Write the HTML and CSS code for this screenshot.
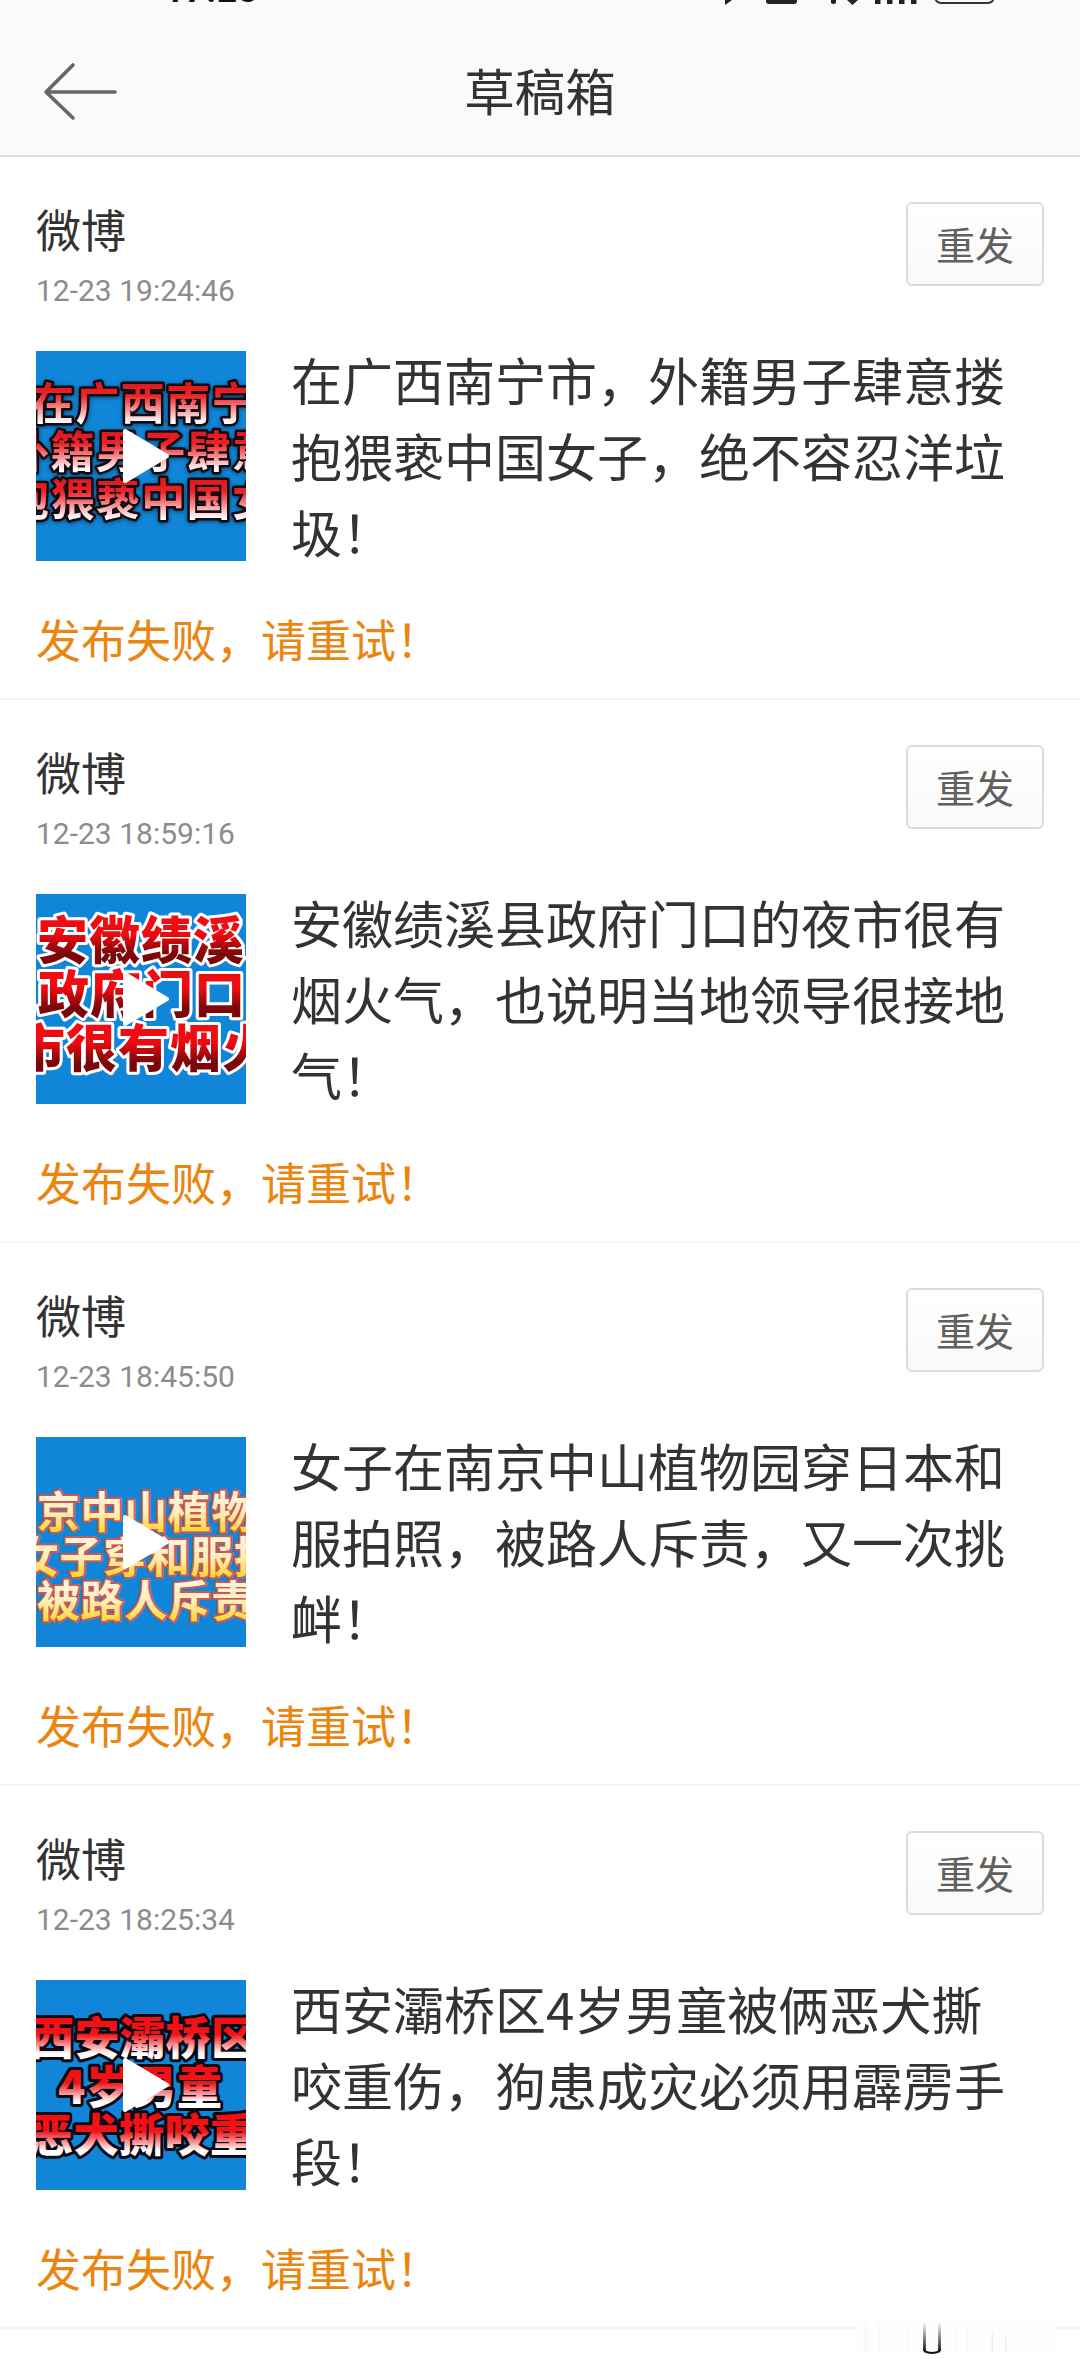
FILE: index.html
```html
<!DOCTYPE html>
<html lang="zh-CN">
<head>
<meta charset="utf-8">
<title>草稿箱</title>
<link rel="stylesheet" href="styles.css">
</head>
<body>
<header class="header">
  <div class="status">
    <span class="clock">17:23</span>
    <svg class="status-icons" width="290" height="8" viewBox="0 0 290 8">
      <path d="M15 0V5L22 0Z" fill="#222"/>
      <rect x="56" y="-10" width="31" height="14" rx="3" fill="#222"/>
      <path d="M121 0h5v3q-2.500 2 -5 0ZM137 0h11l-5.500 5Z" fill="#222"/>
      <path d="M165 0h5.500v4h-5.500ZM177 0h5.500v4h-5.500ZM189 0h5.500v4h-5.500ZM201 0h5.500v4h-5.500Z" fill="#222"/>
      <rect x="225" y="-20" width="59" height="23" rx="6" fill="none" stroke="#333" stroke-width="1.800"/>
    </svg>
  </div>
  <div class="nav">
    <svg class="back" width="76" height="60" viewBox="0 0 76 60"><path d="M31 4L4 31L31 57M4 31H73" fill="none" stroke="#666" stroke-width="3.600" stroke-linecap="round" stroke-linejoin="round"/></svg>
    <h1 class="title">草稿箱</h1>
  </div>
</header>
<main>
  <article class="draft">
    <div class="head">
      <div><h2 class="source">微博</h2><time class="time">12-23 19:24:46</time></div>
      <button class="resend">重发</button>
    </div>
    <div class="body">
      <svg class="thumb" width="210" height="210" viewBox="0 0 210 210">
        <defs><linearGradient id="g1" gradientUnits="userSpaceOnUse" x1="0" y1="28" x2="0" y2="76" spreadMethod="repeat"><stop offset="0" stop-color="#d81518"/><stop offset=".35" stop-color="#ee2328"/><stop offset=".9" stop-color="#fff"/><stop offset="1" stop-color="#fff"/></linearGradient></defs>
        <g class="caption cap-black" fill="url(#g1)">
          <text x="-6" y="69">在广西南宁</text>
          <text x="-31" y="117">外籍男子肆意</text>
          <text x="-31" y="165">抱猥亵中国女</text>
        </g>
        <path class="play" d="M89 80L131 105L89 130Z"/>
      </svg>
      <p class="text">在广西南宁市，外籍男子肆意搂抱猥亵中国女子，绝不容忍洋垃圾！</p>
    </div>
    <p class="error">发布失败，请重试！</p>
  </article>
  <article class="draft">
    <div class="head">
      <div><h2 class="source">微博</h2><time class="time">12-23 18:59:16</time></div>
      <button class="resend">重发</button>
    </div>
    <div class="body">
      <svg class="thumb" width="210" height="210" viewBox="0 0 210 210">
        <defs><linearGradient id="g2" gradientUnits="userSpaceOnUse" x1="0" y1="19" x2="0" y2="73" spreadMethod="repeat"><stop offset="0" stop-color="#f00f14"/><stop offset=".4" stop-color="#ee0a10"/><stop offset=".75" stop-color="#7c080a"/><stop offset="1" stop-color="#780508"/></linearGradient></defs>
        <g class="caption cap-white" fill="url(#g2)">
          <text x="1" y="65">安徽绩溪</text>
          <text x="2" y="119">政府门口</text>
          <text x="-22" y="173">市很有烟火</text>
        </g>
        <path class="play" d="M89 80L131 105L89 130Z"/>
      </svg>
      <p class="text">安徽绩溪县政府门口的夜市很有烟火气，也说明当地领导很接地气！</p>
    </div>
    <p class="error">发布失败，请重试！</p>
  </article>
  <article class="draft">
    <div class="head">
      <div><h2 class="source">微博</h2><time class="time">12-23 18:45:50</time></div>
      <button class="resend">重发</button>
    </div>
    <div class="body">
      <svg class="thumb" width="210" height="210" viewBox="0 0 210 210">
        <defs><linearGradient id="g3" gradientUnits="userSpaceOnUse" x1="0" y1="53" x2="0" y2="97.500" spreadMethod="repeat"><stop offset="0" stop-color="#fff3e4"/><stop offset=".5" stop-color="#ffeebc"/><stop offset=".95" stop-color="#ffd52e"/><stop offset="1" stop-color="#ffd52e"/></linearGradient></defs>
        <g class="caption cap-gold" fill="url(#g3)">
          <text x="1" y="91">京中山植物</text>
          <text x="-20" y="135.500">女子穿和服拍</text>
          <text x="1" y="180">被路人斥责</text>
        </g>
        <path class="play" d="M89 80L131 105L89 130Z"/>
      </svg>
      <p class="text">女子在南京中山植物园穿日本和服拍照，被路人斥责，又一次挑衅！</p>
    </div>
    <p class="error">发布失败，请重试！</p>
  </article>
  <article class="draft">
    <div class="head">
      <div><h2 class="source">微博</h2><time class="time">12-23 18:25:34</time></div>
      <button class="resend">重发</button>
    </div>
    <div class="body">
      <svg class="thumb" width="210" height="210" viewBox="0 0 210 210">
        <defs><linearGradient id="g4" gradientUnits="userSpaceOnUse" x1="0" y1="35" x2="0" y2="83.500" spreadMethod="repeat"><stop offset="0" stop-color="#f80c10"/><stop offset=".4" stop-color="#f01418"/><stop offset=".8" stop-color="#fff"/><stop offset="1" stop-color="#fff"/></linearGradient></defs>
        <g class="caption cap-heavy" fill="url(#g4)">
          <text x="-7" y="75">西安灞桥区</text>
          <text x="22" y="123.500">4岁男童</text>
          <text x="-8" y="172">恶犬撕咬重</text>
        </g>
        <path class="play" d="M89 80L131 105L89 130Z"/>
      </svg>
      <p class="text">西安灞桥区4岁男童被俩恶犬撕咬重伤，狗患成灾必须用霹雳手段！</p>
    </div>
    <p class="error">发布失败，请重试！</p>
  </article>
</main>
<svg class="smudge" width="200" height="36" viewBox="0 0 200 36">
  <defs><linearGradient id="fade" x1="0" y1="0" x2="0" y2="1"><stop offset="0" stop-color="#222" stop-opacity="0"/><stop offset="1" stop-color="#222"/></linearGradient></defs>
  <path d="M0 0H200V32H0Z" fill="#fdfdfd"/>
  <path d="M8 2h3v30h-3ZM22 2h2v30h-2ZM52 4h2v28h-2ZM98 2h2v30h-2ZM110 4h2v28h-2ZM124 6h1v26h-1ZM162 4h1v28h-1ZM178 4h1v28h-1Z" fill="#f9f9f9"/>
  <path d="M135.500 12h1.500v20h-1.500ZM149 18h1.500v14h-1.500Z" fill="#eee"/>
  <path d="M67 2h3v29h-3ZM82 2h3v29h-3Z" fill="url(#fade)"/>
  <path d="M68 31Q76 35 84 31" fill="none" stroke="#111" stroke-width="2"/>
</svg>
</body>
</html>
```
FILE: styles.css
```css
* { box-sizing: border-box; margin: 0; padding: 0; }
body { position: relative; width: 1080px; height: 2376px; overflow: hidden; background: #fff; color: #333; font-family: "Noto Sans CJK SC", sans-serif; font-weight: 400; }
.header { height: 157px; background: #fafafa; border-bottom: 2px solid #dedede; }
.status { display: flex; justify-content: space-between; height: 27px; padding: 0 80px 0 164px; }
.clock { height: 8px; overflow: hidden; font: 700 35px/34px Roboto, sans-serif; letter-spacing: 1px; color: #111; display: flex; align-items: flex-end; }
.status-icons { display: block; }
.nav { display: grid; grid-template-columns: 120px 1fr 120px; align-items: center; height: 128px; }
.back { margin-left: 42px; }
.title { text-align: center; font-size: 50.500px; line-height: 76px; font-weight: 400; margin-top: -4px; }
.draft { height: 543px; padding: 45px 36px 0; border-bottom: 2px solid #f4f4f4; }
.head { display: flex; justify-content: space-between; height: 149px; }
.source { font-size: 45px; line-height: 56px; font-weight: 400; margin-top: -1px; }
.time { display: block; font: 400 30px/36px Roboto, sans-serif; color: #8c8c8c; margin-top: 16px; }
.resend { width: 138px; height: 84px; padding-bottom: 3px; border: 2px solid #dcdcdc; border-radius: 6px; background: linear-gradient(#fff, #f9f9f9); font: 400 39px/76px "Noto Sans CJK SC", sans-serif; color: #606060; }
.body { display: flex; gap: 45px; height: 255px; }
.thumb { flex: none; background: #1186d8; overflow: hidden; }
.text { width: 720px; font-size: 51px; line-height: 76px; margin-top: -10px; }
.error { font-size: 45px; line-height: 68px; color: #ea860f; margin-top: -1px; }
.caption { font-weight: 700; paint-order: stroke; stroke-linejoin: round; }
.cap-black { font-size: 44px; letter-spacing: 1.400px; stroke: #140a10; stroke-width: 5px; filter: drop-shadow(0 1px 2px rgba(0, 0, 0, .5)); }
.cap-white { font-size: 51px; letter-spacing: 1px; font-weight: 900; stroke: #fff; stroke-width: 6px; }
.cap-gold { font-size: 43px; letter-spacing: .600px; stroke: #c65a50; stroke-width: 4px; }
.cap-heavy { font-size: 45px; letter-spacing: .500px; font-weight: 900; stroke: #0a0a14; stroke-width: 6px; }
.play { fill: #fff; stroke: #fff; stroke-width: 4px; stroke-linejoin: round; }
.smudge { position: absolute; left: 856px; top: 2320px; }
```
